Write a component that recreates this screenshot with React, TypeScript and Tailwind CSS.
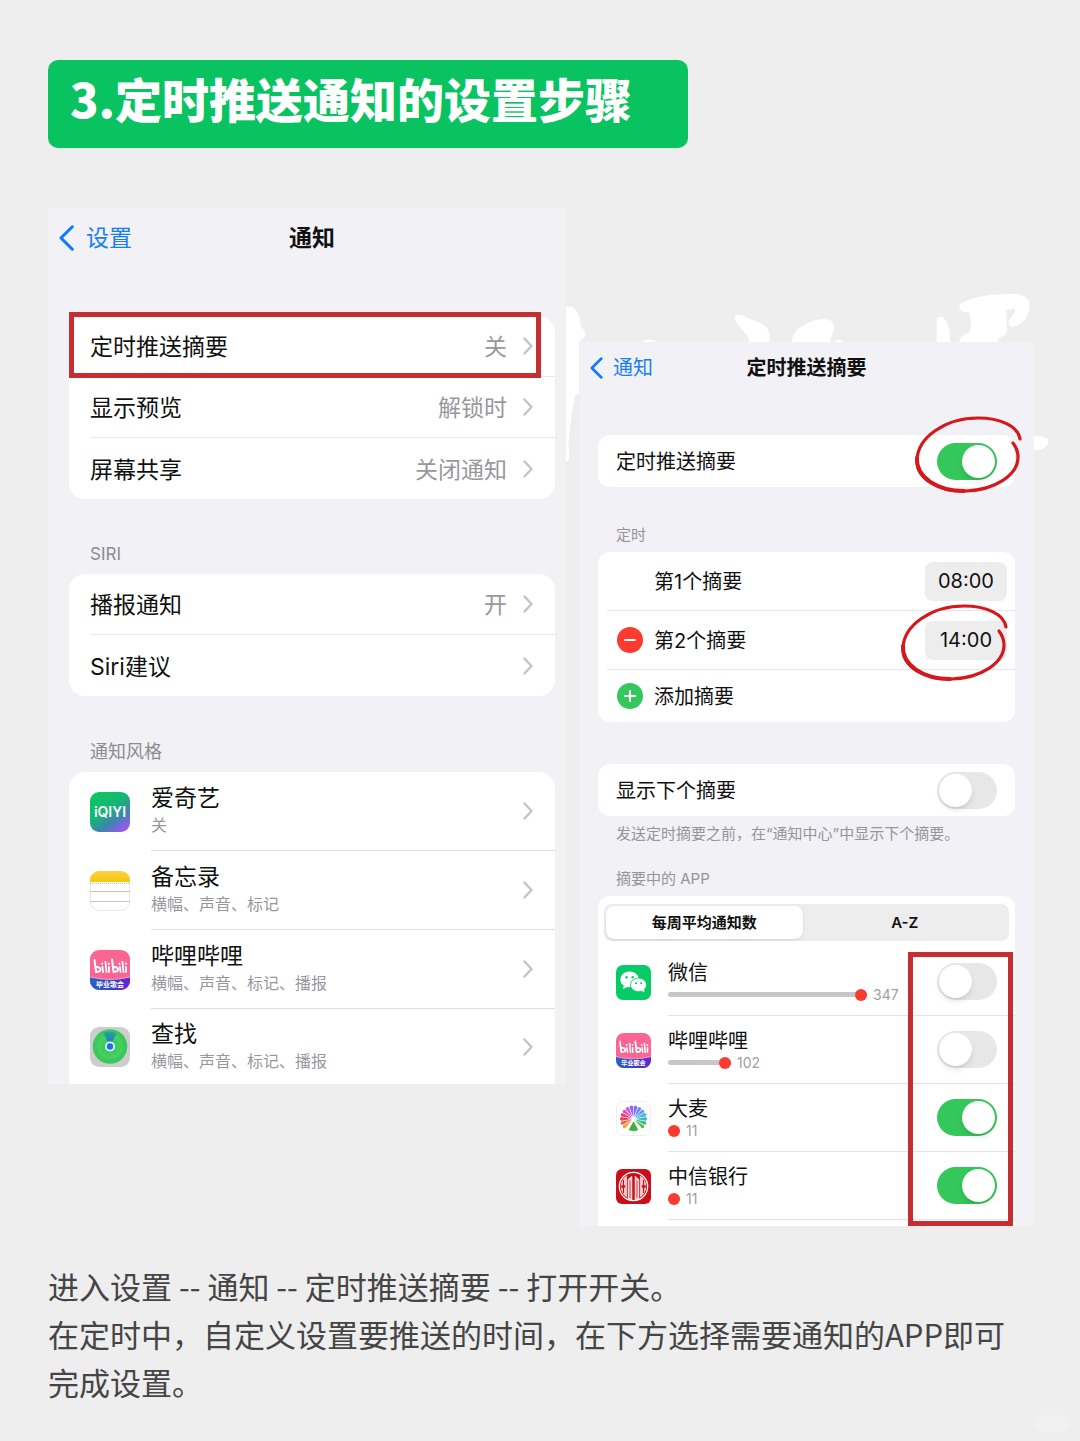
import type { ReactNode } from "react";

function Chevron() {
  return (
    <svg className="h-[18px] w-[10px] shrink-0" viewBox="0 0 10 18" fill="none" aria-hidden="true">
      <path d="M1.5 1.5 8.5 9l-7 7.5" stroke="#c4c4c7" strokeWidth="2.4" strokeLinecap="round" strokeLinejoin="round" />
    </svg>
  );
}

function BackChevron({ className }: { className: string }) {
  return (
    <svg className={className} viewBox="0 0 15 26" fill="none" aria-hidden="true">
      <path d="M13.3 1.8 2 13l11.3 11.2" stroke="#0a7aff" strokeWidth="3" strokeLinecap="round" strokeLinejoin="round" />
    </svg>
  );
}

function Scribble({ className }: { className: string }) {
  return (
    <svg className={className} viewBox="0 0 112 82" fill="none" aria-hidden="true">
      <path
        d="M108 25C106 12 88 4 66 4 34 4 5 23 5 47c0 18 22 31 49 30 29-1 52-16 52-34 0-6-2-10-5-14"
        stroke="#d4181c"
        strokeWidth="3.2"
        strokeLinecap="round"
      />
      <path d="M5 44c-1 19 20 33 47 33" stroke="#d4181c" strokeWidth="3.8" strokeLinecap="round" />
    </svg>
  );
}

function IqiyiIcon() {
  return (
    <svg className="size-full" viewBox="0 0 40 40" role="img" aria-label="爱奇艺">
      <defs>
        <linearGradient id="iqiyi" x1="0.2" y1="0" x2="0.9" y2="1">
          <stop offset="0" stopColor="#0cc763" />
          <stop offset="0.4" stopColor="#15b672" />
          <stop offset="0.68" stopColor="#3f84b0" />
          <stop offset="1" stopColor="#b24dff" />
        </linearGradient>
      </defs>
      <rect width="40" height="40" rx="9" fill="url(#iqiyi)" />
      <text x="20" y="25" textAnchor="middle" fontSize="14" fontWeight="600" fill="#fff" fontFamily="Inter, sans-serif">
        iQIYI
      </text>
    </svg>
  );
}

function NotesIcon() {
  return (
    <svg className="size-full" viewBox="0 0 40 40" role="img" aria-label="备忘录">
      <defs>
        <linearGradient id="notes" x1="0" y1="0" x2="0" y2="1">
          <stop offset="0" stopColor="#fcd344" />
          <stop offset="1" stopColor="#f8c40c" />
        </linearGradient>
      </defs>
      <rect x="0.5" y="0.5" width="39" height="39" rx="9" fill="#fff" stroke="#e8e8e8" />
      <path d="M0 11V9a9 9 0 0 1 9-9h22a9 9 0 0 1 9 9v2z" fill="url(#notes)" />
      <path d="M0 12.5h40" stroke="#c9c2a8" strokeDasharray="1 1" />
      <path d="M0 20.5h40M0 30.5h40" stroke="#c4c4c8" />
    </svg>
  );
}

function BilibiliIcon() {
  return (
    <svg className="size-full" viewBox="0 0 40 40" role="img" aria-label="哔哩哔哩">
      <defs>
        <linearGradient id="bili" x1="0" y1="0" x2="1" y2="0">
          <stop offset="0" stopColor="#2a62c8" />
          <stop offset="0.6" stopColor="#3b3fc4" />
          <stop offset="1" stopColor="#6a22d8" />
        </linearGradient>
      </defs>
      <rect width="40" height="40" rx="9" fill="#fb6593" />
      <path d="M0 27q20 5 40 0v4a9 9 0 0 1-9 9H9a9 9 0 0 1-9-9z" fill="url(#bili)" />
      <path d="M0 27q20 5 40 0" fill="none" stroke="#ffb6cf" strokeWidth="0.8" />
      <g fill="none" stroke="#fff" strokeLinecap="round" strokeLinejoin="round">
        <path d="M4.500 10l1.600 12c6-.2 6-5.500 0-5M22 9.500l1.600 12.500c6-.2 6-5.500 0-5" strokeWidth="2" />
        <path d="M12.500 17l.5 5M15.500 12l1 10M19 17v5M30 17l.5 5M32.500 12l1 10M36 17v5" strokeWidth="1.800" />
        <path d="M12.200 13.500v.5M18.800 13.500v.5M29.500 13.500v.5M36 13.500v.5" strokeWidth="1.800" />
      </g>
      <text x="20" y="37" textAnchor="middle" fontSize="7" fontWeight="700" fill="#fff" fontFamily="'Noto Sans CJK SC', sans-serif">
        毕业歌会
      </text>
    </svg>
  );
}

function FindMyIcon() {
  return (
    <svg className="size-full" viewBox="0 0 40 40" role="img" aria-label="查找">
      <defs>
        <linearGradient id="beam" x1="0" y1="0" x2="0" y2="1">
          <stop offset="0" stopColor="#2f9fa0" />
          <stop offset="1" stopColor="#1274d0" />
        </linearGradient>
      </defs>
      <rect width="40" height="40" rx="9" fill="#cdcdcd" />
      <circle cx="20" cy="19.500" r="17.300" fill="#37c95b" />
      <circle cx="20" cy="19.500" r="13" fill="#48ce5c" />
      <circle cx="20" cy="19.500" r="9" fill="#3ccb5e" />
      <path d="M20 19.500 13.500 6q6.500-3 13 0z" fill="url(#beam)" />
      <circle cx="20" cy="19.500" r="5" fill="#e9f4ff" />
      <circle cx="20" cy="19.500" r="3.200" fill="#1b6fd8" />
    </svg>
  );
}

function WechatIcon() {
  return (
    <svg className="size-full" viewBox="0 0 40 40" role="img" aria-label="微信">
      <rect width="40" height="40" rx="8" fill="#07cc66" />
      <ellipse cx="15.500" cy="16.500" rx="10.600" ry="9" fill="#fff" />
      <path d="M9 23l-1 4.500 5-2.500z" fill="#fff" />
      <circle cx="12" cy="14" r="1.400" fill="#07cc66" />
      <circle cx="19" cy="14" r="1.400" fill="#07cc66" />
      <ellipse cx="25.700" cy="22.700" rx="9.200" ry="7.800" fill="#fff" stroke="#07cc66" strokeWidth="1" />
      <path d="M29 29l3.500 2.200-.6-4z" fill="#fff" />
      <circle cx="22.800" cy="20.800" r="1.200" fill="#07cc66" />
      <circle cx="28.800" cy="20.800" r="1.200" fill="#07cc66" />
    </svg>
  );
}

const petals = [
  "#f2a33a", "#f0653c", "#ee3f52", "#f0417c", "#e650b4", "#c95ae0", "#a05cf0",
  "#7a72f4", "#6a86f6", "#5aa0f4", "#45b4e6", "#38bfc0", "#35b98a", "#5fbf4a",
];

function DamaiIcon() {
  return (
    <svg className="size-full" viewBox="0 0 40 40" role="img" aria-label="大麦">
      <rect x="0.500" y="0.500" width="39" height="39" rx="8" fill="#fff" stroke="#ececec" />
      {petals.map((color, i) => (
        <path key={color} d="M20 18.500 17.900 6.500q2.100-3 4.200 0z" fill={color} transform={`rotate(${-130 + i * 20} 20 20.500)`} />
      ))}
      <path d="M20 23 25.500 33q-5.500 2.500-11 0z" fill="#3fae3a" />
    </svg>
  );
}

function CiticIcon() {
  return (
    <svg className="size-full" viewBox="0 0 40 40" role="img" aria-label="中信银行">
      <rect width="40" height="40" rx="7" fill="#cb0f1a" />
      <circle cx="20" cy="20" r="16.200" fill="none" stroke="#fff" strokeWidth="1.400" />
      <path d="M12.500 7.500C3 13 3 27 12.500 32.500z" fill="#f6c9c9" />
      <path d="M27.500 7.500c9.500 5.500 9.500 19.500 0 25z" fill="#f6c9c9" />
      <path d="M8.500 12.500v15M31.500 12.500v15" stroke="#cb0f1a" strokeWidth="1.300" />
      <path d="M6 18.500h4.500v3H6zM29.500 18.500H34v3h-4.500z" fill="#cb0f1a" />
      <path d="M14 34V12l4-3.500V35.500zM26 34V12l-4-3.500V35.500z" fill="#f6c9c9" stroke="#fff" strokeWidth="1" />
      <path d="M16 13v20M24 13v20" stroke="#cb0f1a" strokeWidth="0.800" />
    </svg>
  );
}

function Toggle({ label, on }: { label: string; on?: boolean }) {
  return (
    <input
      type="checkbox"
      role="switch"
      aria-label={label}
      defaultChecked={on}
      className="block h-[37px] w-[60px] shrink-0 cursor-pointer appearance-none rounded-full bg-[#e7e7e8] p-0.5 before:block before:size-[33px] before:rounded-full before:bg-white before:shadow-md checked:bg-[#34c759] checked:before:translate-x-[23px]"
    />
  );
}

const styles = [
  { name: "爱奇艺", detail: "关", icon: <IqiyiIcon /> },
  { name: "备忘录", detail: "横幅、声音、标记", icon: <NotesIcon /> },
  { name: "哔哩哔哩", detail: "横幅、声音、标记、播报", icon: <BilibiliIcon /> },
  { name: "查找", detail: "横幅、声音、标记、播报", icon: <FindMyIcon /> },
];

const apps = [
  { name: "微信", count: 347, bar: 199, icon: <WechatIcon />, on: false },
  { name: "哔哩哔哩", count: 102, bar: 63, icon: <BilibiliIcon />, on: false },
  { name: "大麦", count: 11, bar: 12, icon: <DamaiIcon />, on: true },
  { name: "中信银行", count: 11, bar: 12, icon: <CiticIcon />, on: true },
];

function SettingRow({ name, value }: { name: string; value?: string }) {
  return (
    <li className="group pl-[21px]">
      <a href="#" className="flex h-[61px] items-center border-b border-[#e9e9eb] pr-[22px] text-[23px] group-last:border-0">
        <span className="pt-[3px]">{name}</span>
        <span className="mr-4 ml-auto pt-[3px] text-[#98989c]">{value}</span>
        <Chevron />
      </a>
    </li>
  );
}

function NotificationsPanel() {
  return (
    <section className="bg-[#f1f1f6] pr-[11px] pl-[21px]">
      <header className="grid h-[60px] grid-cols-3 items-center text-[23px]">
        <a href="#" className="-ml-2.5 flex items-center gap-3 text-[#1b7ff0]">
          <BackChevron className="h-[26px] w-[15px]" />
          设置
        </a>
        <h2 className="text-center font-semibold">通知</h2>
      </header>

      <div className="relative mt-12">
        <ul className="rounded-2xl bg-white">
          <SettingRow name="定时推送摘要" value="关" />
          <SettingRow name="显示预览" value="解锁时" />
          <SettingRow name="屏幕共享" value="关闭通知" />
        </ul>
        <div className="pointer-events-none absolute -top-1 right-3.5 left-0 h-[66px] border-5 border-[#c62f32]" />
      </div>

      <h3 className="mt-[43px] pl-[21px] text-[17px] leading-6 text-[#8c8c91]">SIRI</h3>
      <ul className="mt-2 rounded-2xl bg-white">
        <SettingRow name="播报通知" value="开" />
        <SettingRow name="Siri建议" />
      </ul>

      <h3 className="mt-11 pl-[21px] text-lg leading-6 text-[#8c8c91]">通知风格</h3>
      <ul className="mt-2 rounded-t-2xl bg-white">
        {styles.map((app) => (
          <li key={app.name} className="group pl-[21px]">
            <a href="#" className="flex h-[79px] items-center group-last:h-[75px]">
              <span className="size-10 shrink-0">{app.icon}</span>
              <span className="ml-[21px] flex h-full flex-1 items-center justify-between border-b border-[#dedee0] pr-[22px] group-last:border-0">
                <span className="pb-[3px]">
                  <span className="block text-[23px] leading-8">{app.name}</span>
                  <span className="block text-base leading-[23px] text-[#98989c]">{app.detail}</span>
                </span>
                <Chevron />
              </span>
            </a>
          </li>
        ))}
      </ul>
    </section>
  );
}

function ScheduleRow({ color, sign, children }: { color: string; sign: string; children: ReactNode }) {
  return (
    <>
      <svg className="size-[26px] shrink-0" viewBox="0 0 26 26" fill="none" aria-hidden="true">
        <circle cx="13" cy="13" r="13" fill={color} />
        <path d={sign} stroke="#fff" strokeWidth="2" strokeLinecap="round" />
      </svg>
      {children}
    </>
  );
}

function SummaryPanel() {
  const timeClass = "h-[39px] w-[82px] rounded-lg bg-[#ededee] text-xl";

  return (
    <section className="mt-[134px] bg-[#f1f1f6] pr-[19px] pl-[18px] text-xl">
      <header className="grid h-[52px] grid-cols-3 items-center">
        <a href="#" className="-ml-2 flex items-center gap-2.5 text-[#1b7ff0]">
          <BackChevron className="h-[22px] w-[13px]" />
          通知
        </a>
        <h2 className="text-center font-semibold whitespace-nowrap">定时推送摘要</h2>
      </header>

      <div className="mt-[41px] flex h-[52px] items-center justify-between rounded-xl bg-white px-[18px]">
        <span className="pt-0.5">定时推送摘要</span>
        <span className="relative">
          <Toggle label="定时推送摘要" on />
          <Scribble className="pointer-events-none absolute -top-[29px] -left-[25px] h-[82px] w-[112px]" />
        </span>
      </div>

      <h3 className="mt-9 pl-[18px] text-[15px] leading-6 text-[#95959a]">定时</h3>
      <ul className="mt-[5px] rounded-xl bg-white pl-[9px]">
        <li className="flex h-[59px] items-center justify-between border-b border-[#e6e6e8] pr-2 pl-[47px]">
          <span className="pt-0.5">第1个摘要</span>
          <button type="button" className={timeClass}>08:00</button>
        </li>
        <li className="flex h-[59px] items-center gap-[11px] border-b border-[#e6e6e8] pr-2 pl-2.5">
          <ScheduleRow color="#fc3b30" sign="M8 13h10">
            <span className="pt-0.5">第2个摘要</span>
          </ScheduleRow>
          <span className="relative ml-auto">
            <button type="button" className={timeClass}>14:00</button>
            <Scribble className="pointer-events-none absolute -top-[19px] -left-[27px] h-[82px] w-[112px]" />
          </span>
        </li>
        <li className="pl-2.5">
          <button type="button" className="flex h-[52px] items-center gap-[11px]">
            <ScheduleRow color="#34c759" sign="M8 13h10M13 8v10">
              <span className="pt-0.5">添加摘要</span>
            </ScheduleRow>
          </button>
        </li>
      </ul>

      <div className="mt-[42px] flex h-[52px] items-center justify-between rounded-xl bg-white px-[18px]">
        <span className="pt-0.5">显示下个摘要</span>
        <Toggle label="显示下个摘要" />
      </div>
      <p className="mt-1.5 pl-[18px] text-[15px] leading-6 text-[#95959a]">
        发送定时摘要之前，在“通知中心”中显示下个摘要。
      </p>

      <h3 className="mt-[21px] pl-[18px] text-[15px] leading-6 text-[#95959a]">摘要中的 APP</h3>
      <div className="relative mt-[5px] rounded-t-xl bg-white pt-2 pb-1.5">
        <div className="mx-1.5 mb-[7px] grid h-[37px] grid-cols-[197fr_205fr] rounded-lg bg-[#ededee] p-0.5 text-[15px] font-semibold">
          <button type="button" className="rounded-lg bg-white shadow">每周平均通知数</button>
          <button type="button">A-Z</button>
        </div>
        <ul className="pl-[18px]">
          {apps.map((app) => (
            <li key={app.name} className="flex h-[68px] items-center">
              <span className="size-[35px] shrink-0">{app.icon}</span>
              <div className="ml-[17px] flex h-full flex-1 items-center justify-between border-b border-[#e4e4e6] pr-[18px]">
                <div className="pb-0.5">
                  <p className="leading-7">{app.name}</p>
                  <div className="flex h-4 items-center gap-1.5">
                    <div className="flex h-[5px] items-center justify-end rounded-full bg-[#c7c7ca]" style={{ width: app.bar }}>
                      <span className="size-3 shrink-0 rounded-full bg-[#fc3b30]" />
                    </div>
                    <span className="text-sm leading-none text-[#a0a0a4]">{app.count}</span>
                  </div>
                </div>
                <Toggle label={app.name} on={app.on} />
              </div>
            </li>
          ))}
        </ul>
        <div className="pointer-events-none absolute top-14 right-0.5 bottom-0 w-[105px] border-5 border-[#c62f32]" />
      </div>
    </section>
  );
}

function BrushStrokes() {
  return (
    <svg className="pointer-events-none absolute top-[72px] left-[502px] h-[220px] w-[500px]" viewBox="0 0 1500 660" fill="#fff" aria-hidden="true">
      <path d="M47 80c25-4 43 15 45 60q20 15 13 30l-17 15v155l-13 5q-15 85-20 145 7 55-5 55l-3-5z" />
      <path d="M268 188q32-18 57 0z" />
      <path d="M555 107c8-8 24-2 40 8 20 8 46 14 58 32 8 14 6 26 4 41h-60c2-14-8-26-22-40-10-14-22-24-20-41z" />
      <path d="M725 188c4-24 12-42 34-50 18-14 44-22 68-20 22 0 28 16 24 34-4 12-10 24-13 36zM850 188q15-18 32 0z" />
      <path d="M1160 188v-73c10-10 20-4 26 6 12 10 14 40 14 67z" />
      <path d="M1230 72c40-26 110-32 172-30 26 4 40 18 36 44-6 34-28 50-50 54-12 0-16-14-6-26 10-10 14-16 13-28l-27 4c2 16 2 34 2 50 4 14-2 26-14 30-10 4-14 10-16 18h-112c0-16 12-24 30-32 8-12 4-34 0-60-24 4-34-10-28-24z" />
      <path d="M1452 468q28-3 43 12 0 20-20 28l-23 4z" />
    </svg>
  );
}

export default function App() {
  return (
    <main className="relative min-h-screen bg-[#eee] pt-[60px] pr-[46px] pb-[33px] pl-12 font-[Inter,'Noto_Sans_CJK_SC',sans-serif] text-[#111]">
      <h1 className="flex h-[88px] max-w-[640px] items-center rounded-[10px] bg-[#09c361] px-[22px] pb-3 font-['Noto_Sans_CJK_SC',sans-serif] text-[47px] font-black whitespace-nowrap text-white">
        3.定时推送通知的设置步骤
      </h1>

      <div className="relative mt-[60px]">
        <BrushStrokes />
        <div className="relative grid grid-cols-[518fr_454fr] items-start gap-3.5">
          <NotificationsPanel />
          <SummaryPanel />
        </div>
      </div>

      <p className="mt-9 font-['Noto_Sans_CJK_SC',sans-serif] text-[31px] leading-[48px] text-[#454545]">
        进入设置 -- 通知 -- 定时推送摘要 -- 打开开关。
        <br />
        在定时中，自定义设置要推送的时间，在下方选择需要通知的APP即可完成设置。
      </p>
      <span className="absolute right-2.5 bottom-2.5 h-4 w-9 rounded-full bg-[#f1f1f1]" />
    </main>
  );
}
